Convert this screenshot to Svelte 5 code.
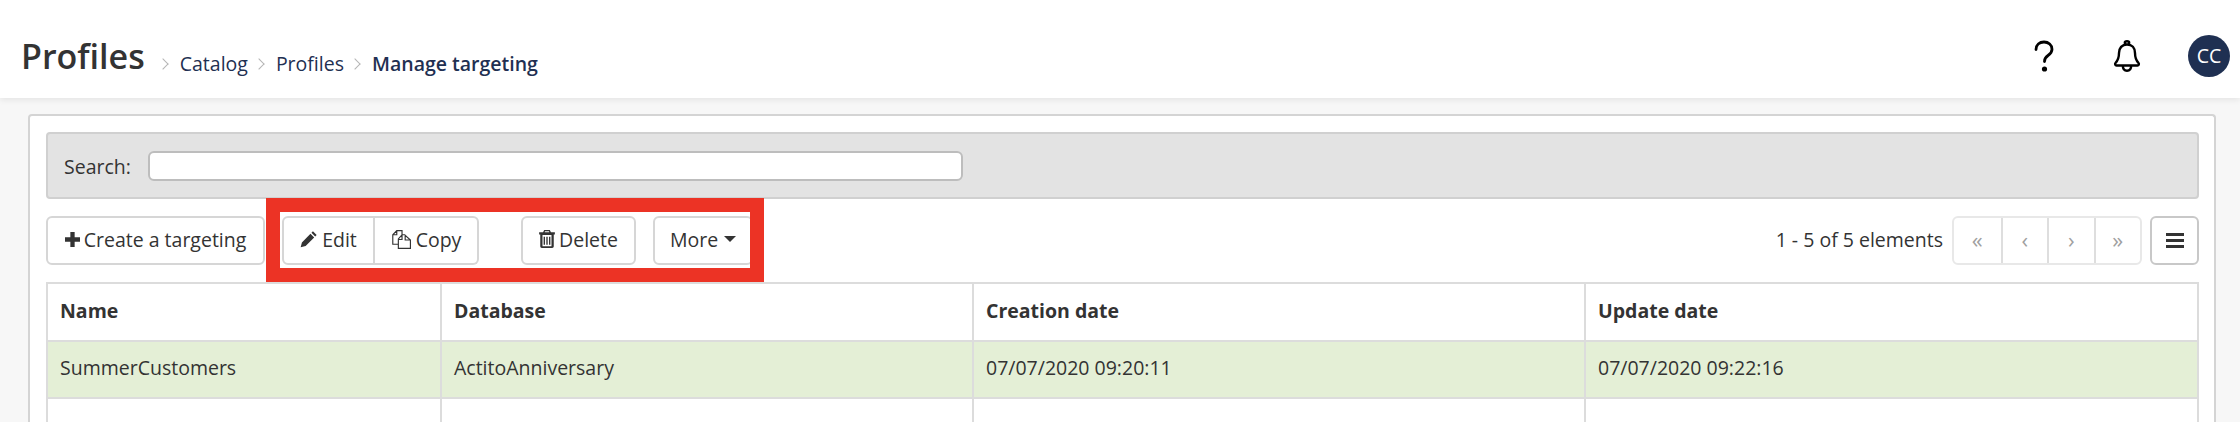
<script>
	const crumbs = ['Catalog', 'Profiles'];
	const columns = ['Name', 'Database', 'Creation date', 'Update date'];
	const row = ['SummerCustomers', 'ActitoAnniversary', '07/07/2020 09:20:11', '07/07/2020 09:22:16'];
</script>

<div class="page">
	<header class="topbar">
		<h1>Profiles</h1>
		<nav class="crumbs">
			{#each crumbs as crumb}
				<span class="chev"></span>
				<span>{crumb}</span>
			{/each}
			<span class="chev"></span>
			<strong>Manage targeting</strong>
		</nav>
		<div class="top-actions">
			<svg class="help" viewBox="0 0 20 32" width="20" height="32">
				<path d="M2 9.500C2 4.800 5.500 2 10 2s8 3 8 7.200c0 3.200-1.600 4.700-4 6.300-2.400 1.600-3.500 2.800-3.500 6" fill="none" stroke="#000" stroke-width="2.800" stroke-linecap="round" />
				<circle cx="10.500" cy="29" r="2.600" />
			</svg>
			<svg class="bell" viewBox="0 0 28 32" width="28" height="32">
				<path d="M14 4.500c-5 0-8 3.600-8 8.500 0 5-1.200 7.500-3.500 10-.8.900-.3 2.500 1 2.500h21c1.300 0 1.800-1.600 1-2.500-2.300-2.500-3.500-5-3.500-10 0-4.900-3-8.500-8-8.500zM14 4.500c-1.400 0-2.200-.8-2.200-1.700S12.700 1.200 14 1.200s2.200.7 2.200 1.600-.8 1.700-2.200 1.700zM9.800 25.500c0 3.500 1.800 5.300 4.200 5.300s4.200-1.800 4.200-5.300" fill="none" stroke="#000" stroke-width="2.400" stroke-linejoin="round" />
			</svg>
			<div class="avatar">CC</div>
		</div>
	</header>

	<main class="card">
		<div class="search">
			<label for="q">Search:</label>
			<input id="q" type="text" />
		</div>

		<div class="toolbar">
			<button class="btn create">
				<svg viewBox="0 0 14 14" width="15" height="15"><path d="M5 0h4v5h5v4H9v5H5V9H0V5h5z" /></svg>
				Create a targeting
			</button>
			<div class="group">
				<button class="btn">
					<svg viewBox="0 0 16 16" width="18" height="18"><path d="M11.500 1.200 14.800 4.500 13.500 5.800 10.200 2.500zM9.300 3.400 12.600 6.700 5 14.300 0.600 15.400 1.700 11z" /></svg>
					Edit
				</button>
				<button class="btn">
					<svg viewBox="0 0 20 20" width="21" height="21"><path d="M7 14.500H1.700V5.500L5.500 1.500H10.500V5.500M5.500 1.500V5.500H1.700M10.500 5.500H13L18.500 10.500V18.500H7V9.500L10.500 5.500ZM10.500 5.500V10H7M13.500 5.500V10.500H18.500" fill="none" stroke="#333" stroke-width="1.100" /></svg>
					Copy
				</button>
			</div>
			<button class="btn delete">
				<svg viewBox="0 0 14 16" width="16" height="18"><path fill-rule="evenodd" d="M4.500 0h5l1 2H14v2h-1v10.500c0 .8-.6 1.500-1.400 1.500H2.400C1.600 16 1 15.300 1 14.500V4H0V2h3.500zM5.200 1 5 2h4l-.2-1zM3 4.500V14.500h8V4.500zM4 6h1.200v7H4zM6.400 6h1.200v7H6.400zM8.800 6H10v7H8.800z" /></svg>
				Delete
			</button>
			<button class="btn more">More <span class="caret"></span></button>

			<div class="pager-wrap">
				<span class="count">1 - 5 of 5 elements</span>
				<div class="pager">
					<span>«</span>
					<span>‹</span>
					<span>›</span>
					<span>»</span>
				</div>
				<button class="btn menu" aria-label="Columns"><i></i><i></i><i></i></button>
			</div>
		</div>

		<table>
			<colgroup>
				<col style="width: 394px" />
				<col style="width: 532px" />
				<col style="width: 612px" />
				<col />
			</colgroup>
			<thead>
				<tr>
					{#each columns as col}<th><span>{col}</span></th>{/each}
				</tr>
			</thead>
			<tbody>
				<tr class="selected">
					{#each row as cell}<td><span>{cell}</span></td>{/each}
				</tr>
				<tr>
					{#each columns as col}<td>&nbsp;</td>{/each}
				</tr>
			</tbody>
		</table>
	</main>

	<div class="highlight"></div>
</div>

<style>
	:global(body) {
		margin: 0;
		background: #f7f7f7;
	}

	.page {
		position: relative;
		height: 422px;
		overflow: hidden;
		font-family: 'Open Sans', 'Noto Sans', sans-serif;
		font-size: 19.5px;
		color: #333;
		background: #f7f7f7;
	}

	.topbar {
		display: flex;
		align-items: center;
		height: 98px;
		padding: 14px 10px 0 21px;
		box-sizing: border-box;
		background: #fff;
		box-shadow: 0 2px 6px rgba(0, 0, 0, 0.08);
	}

	h1 {
		margin: 0;
		font-size: 34px;
		font-weight: 600;
		color: #333;
		line-height: 1;
	}

	.crumbs {
		display: flex;
		align-items: center;
		margin-left: 14px;
		color: #1f3052;
		font-size: 19.5px;
		padding-top: 14px;
	}

	.crumbs strong {
		font-weight: 600;
	}

	.chev {
		width: 7px;
		height: 7px;
		margin: 2px 13px 0 7px;
		border-top: 1px solid #b5b5b5;
		border-right: 1px solid #b5b5b5;
		transform: rotate(45deg);
	}

	.crumbs > .chev:first-child {
		margin-left: 0;
	}

	.top-actions {
		margin-left: auto;
		display: flex;
		align-items: center;
	}

	.bell {
		margin-left: 59px;
	}

	.avatar {
		width: 42px;
		height: 42px;
		margin-left: 47px;
		border-radius: 50%;
		background: #1f3052;
		color: #fff;
		font-size: 19.5px;
		line-height: 42px;
		text-align: center;
	}

	.card {
		margin: 16px 24px 0 28px;
		padding: 16px 15px 0 16px;
		height: 320px;
		background: #fff;
		border: 2px solid #d4d4d4;
		border-bottom: 0;
		border-radius: 4px 4px 0 0;
	}

	.search {
		display: flex;
		align-items: center;
		gap: 17px;
		height: 63px;
		padding: 0 16px;
		background: #e3e3e3;
		border: 2px solid #d0d0d0;
		border-radius: 4px;
	}

	.search label {
		font-size: 19.5px;
		padding-top: 2px;
	}

	.search input {
		width: 815px;
		height: 30px;
		margin: 0;
		padding: 0 8px;
		box-sizing: border-box;
		background: #fff;
		border: 2px solid #bdbdbd;
		border-radius: 6px;
	}

	.toolbar {
		display: flex;
		align-items: center;
		height: 49px;
		margin-top: 17px;
	}

	.btn {
		display: inline-flex;
		align-items: center;
		justify-content: center;
		gap: 4px;
		height: 49px;
		padding: 0 0 3px;
		background: #fff;
		border: 2px solid #d6d6d6;
		border-radius: 6px;
		font: inherit;
		color: #333;
		box-sizing: border-box;
	}

	.btn svg {
		fill: #333;
		flex: none;
	}

	.create {
		width: 219px;
		margin-right: 17px;
	}

	.group {
		display: flex;
		width: 197px;
	}

	.group .btn:first-child {
		width: 93px;
		border-radius: 6px 0 0 6px;
	}

	.group .btn:last-child {
		flex: 1;
		border-left: 0;
		border-radius: 0 6px 6px 0;
	}

	.delete {
		width: 115px;
		margin-left: 42px;
	}

	.more {
		width: 100px;
		margin-left: 17px;
		gap: 6px;
	}

	.caret {
		width: 0;
		height: 0;
		border-left: 6px solid transparent;
		border-right: 6px solid transparent;
		border-top: 6px solid #333;
	}

	.pager-wrap {
		margin-left: auto;
		display: flex;
		align-items: center;
	}

	.count {
		margin-right: 9px;
		padding-bottom: 2px;
	}

	.pager {
		display: flex;
		height: 49px;
		box-sizing: border-box;
		border: 2px solid #e8e8e8;
		border-radius: 6px;
		color: #a0a0a0;
		font-size: 22px;
	}

	.pager span {
		display: flex;
		align-items: center;
		justify-content: center;
		width: 46.500px;
		border-left: 2px solid #dedede;
		padding-bottom: 4px;
		box-sizing: border-box;
	}

	.pager span:first-child {
		border-left: 0;
	}

	.menu {
		flex-direction: column;
		gap: 3px;
		width: 49px;
		margin-left: 8px;
		padding: 0;
		border-color: #c8c8c8;
	}

	.menu i {
		display: block;
		width: 18px;
		height: 3px;
		background: #333;
	}

	table {
		width: 100%;
		margin-top: 17px;
		border-collapse: collapse;
		table-layout: fixed;
		font-size: 19.5px;
	}

	th,
	td {
		height: 57.500px;
		padding: 0 12px 3px;
		border: 2px solid #dcdcdc;
		text-align: left;
		box-sizing: border-box;
	}

	th {
		font-weight: 700;
	}

	.selected td {
		background: #e4efd6;
	}

	.highlight {
		position: absolute;
		left: 266px;
		top: 198px;
		width: 498px;
		height: 84px;
		box-sizing: border-box;
		border: 14px solid #ec3325;
		pointer-events: none;
	}
</style>
